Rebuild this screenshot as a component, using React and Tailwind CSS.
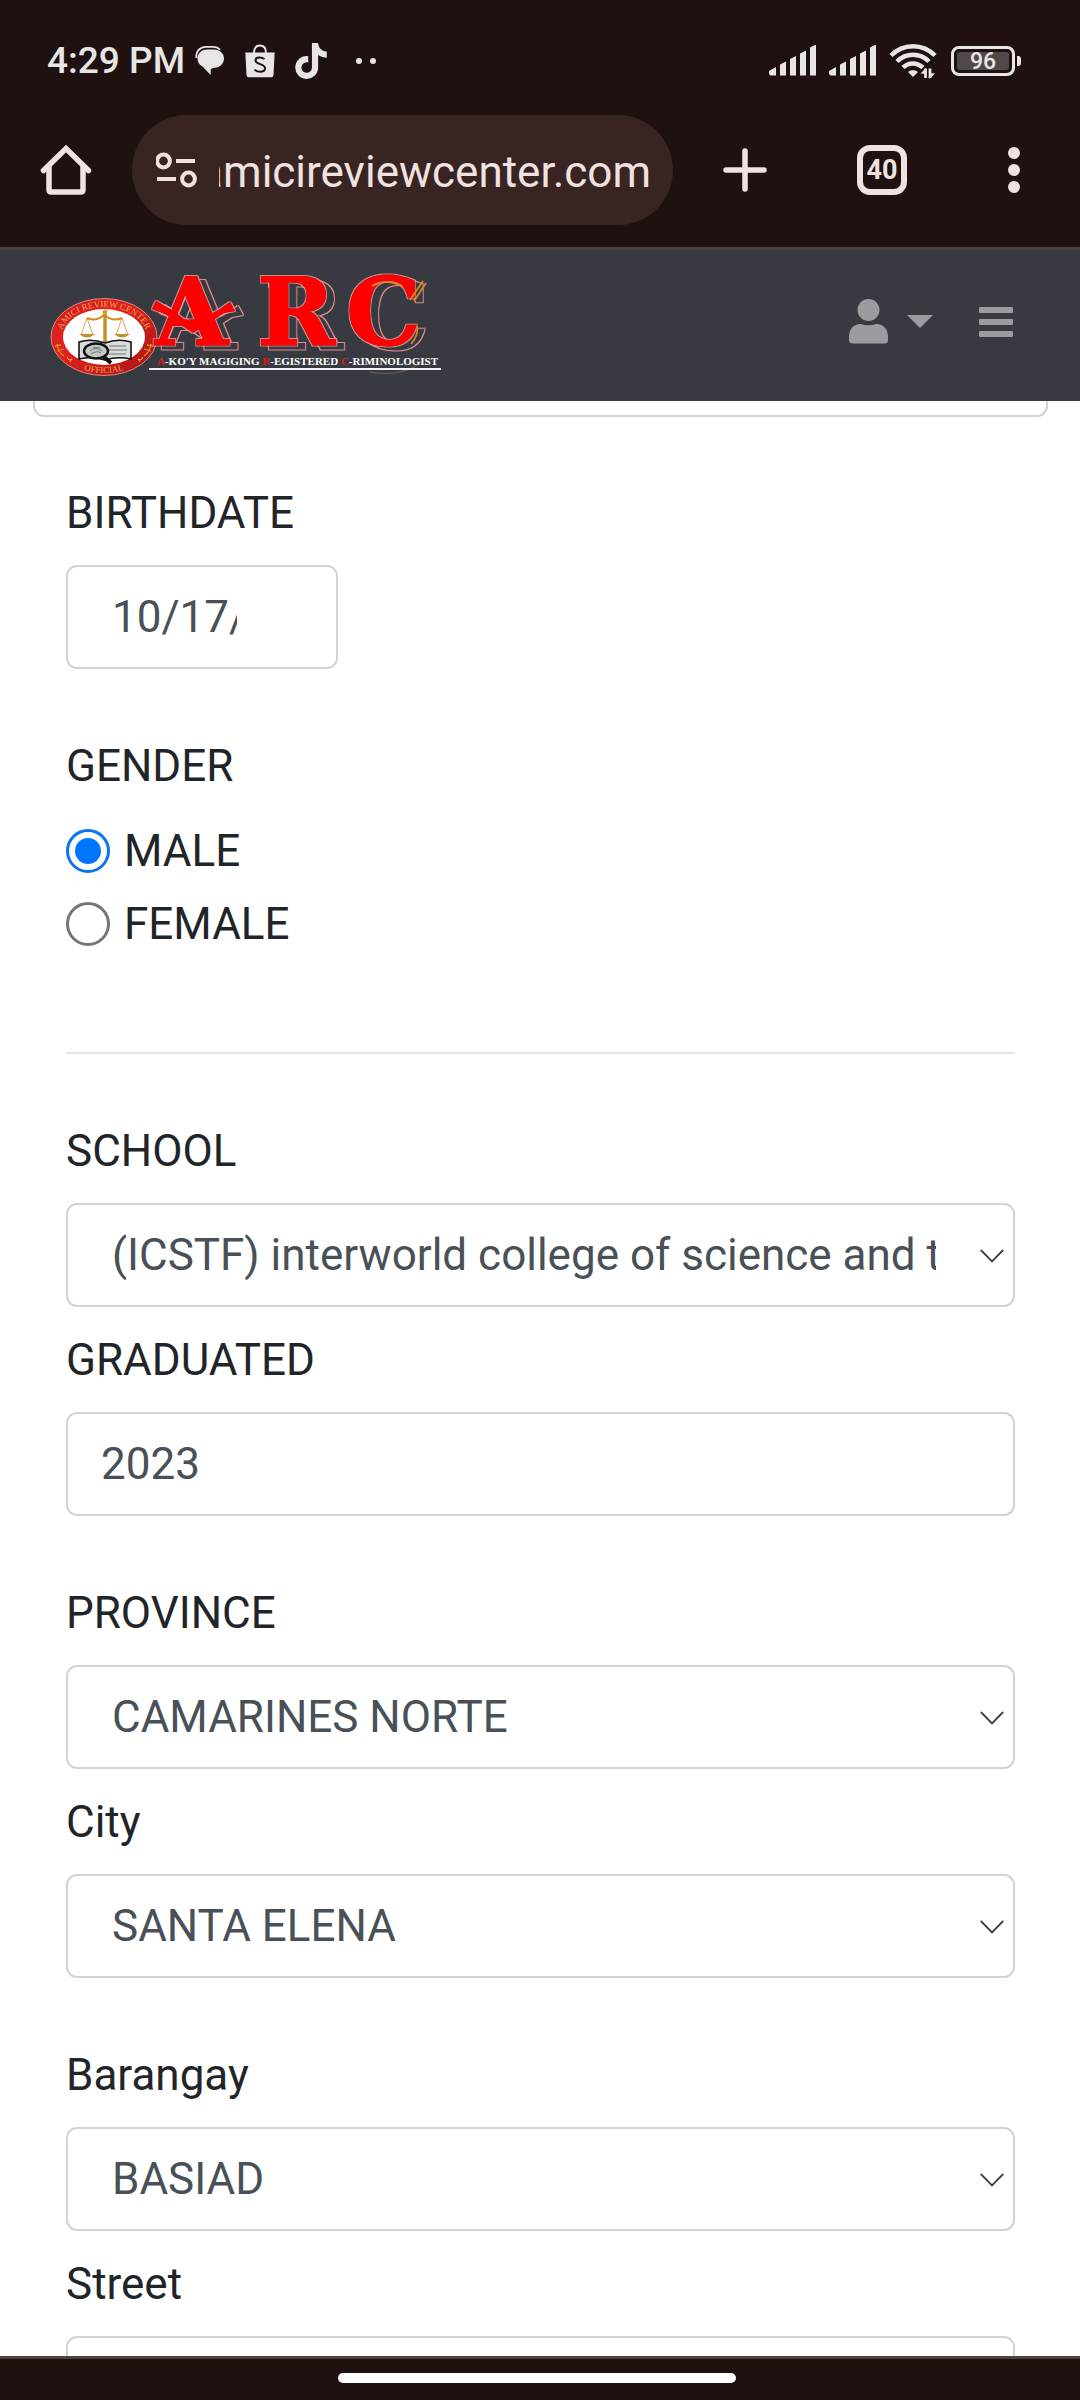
import { FaTiktok } from "react-icons/fa6";

const label = "block text-[44px] leading-[66px] text-[#212529]";
const control =
  "h-[104px] rounded-[11px] border-2 border-[#ced4da] bg-white text-[44px] leading-[66px] text-[#495057] outline-none";

function ChatIcon() {
  return (
    <svg width="30" height="30" viewBox="0 0 30 30" aria-hidden="true">
      <path d="M1.500 12C.2 5.500 5 1.200 11 .9h7c3 0 5.500 1 7 3" fill="none" stroke="#e8e6e5" strokeWidth="1.800" />
      <path d="M12 3.500h7C25 3.500 29 7.500 29 12.500s-4 9-9.500 9.200c-2 .2-3.500.8-3.800 2.300V29L7.500 20.500C4 18.500 2.500 16 2.500 12.500c0-5 4-9 9.500-9z" fill="#e8e6e5" />
    </svg>
  );
}

function BagIcon() {
  return (
    <svg width="30" height="34" viewBox="0 0 30 34" aria-hidden="true">
      <path d="M9 9c0-5 2.500-7.500 6-7.500S21 4 21 9" fill="none" stroke="#e8e6e5" strokeWidth="1.800" />
      <path d="M.3 8.500h29.400L28.500 31c-.2 1.500-1.200 2.300-2.500 2.300H4c-1.300 0-2.300-.8-2.500-2.300z" fill="#e8e6e5" />
      <path d="M19.500 15c-3-2.200-9-2.500-9 1.300 0 4.700 9.500 2.900 9.500 8 0 4.500-7.500 4.200-10.500 1.300" fill="none" stroke="#1f1110" strokeWidth="2" />
    </svg>
  );
}

function Signal() {
  return (
    <svg width="48" height="32" viewBox="0 0 48 32" fill="#e8e6e5" aria-hidden="true">
      <path d="M0 26l7-4v8.500H1.500L0 29z" />
      <path d="M11 19.500l6-3v14h-6z" />
      <path d="M21 14l6-3v19.500h-6z" />
      <path d="M31 8.500l6-3v25h-6z" />
      <path d="M41 2.500l6-3v31h-6z" />
    </svg>
  );
}

function Wifi() {
  return (
    <svg width="48" height="36" viewBox="0 0 48 36" fill="none" stroke="#e8e6e5" strokeWidth="4.500" aria-hidden="true">
      <path d="M2 12.500c12-12.500 32-12.500 44 0" />
      <path d="M8 18.500c9-9 23-9 32 0" />
      <path d="M14 24.500c5.500-5.500 14-5.500 20 0" />
      <path d="M24 34l-5-5c2.500-2.500 7.500-2.500 10 0z" fill="#e8e6e5" stroke="none" />
      <path d="M36.500 25.500v9.500M41 25.500V35" strokeWidth="2.800" />
      <path d="M31.500 30.500L37 25v6zM46 30.500L40.500 36v-6z" fill="#e8e6e5" stroke="none" />
    </svg>
  );
}

function StatusBar() {
  return (
    <div className="flex h-12 items-center justify-between pl-[47px] pr-[59px] text-[#e8e6e5]">
      <div className="flex items-center">
        <span className="text-[37px] leading-[48px] font-medium">4:29 PM</span>
        <div className="ml-[10px] flex items-center gap-5">
          <ChatIcon />
          <BagIcon />
          <FaTiktok className="h-9 w-8" />
          <div className="ml-[9px] flex gap-2">
            <span className="size-[6px] rounded-full bg-[#e8e6e5]" />
            <span className="size-[6px] rounded-full bg-[#e8e6e5]" />
          </div>
        </div>
      </div>
      <div className="flex items-center gap-3">
        <Signal />
        <Signal />
        <Wifi />
        <div className="flex items-center gap-0.5 pl-0.5">
          <div className="flex h-[30px] w-16 items-center justify-center rounded-[8px] border-[3px] border-[#e8e6e5] p-[3px]">
            <span className="flex h-[18px] w-full items-center justify-center rounded-[3px] bg-[#514848] pt-0.5 text-[23px] leading-[18px] font-medium">
              96
            </span>
          </div>
          <span className="h-[10px] w-1 rounded-r-[3px] bg-[#e8e6e5]" />
        </div>
      </div>
    </div>
  );
}

function Toolbar() {
  return (
    <div className="flex items-center pr-[53px] pl-10">
      <button type="button" aria-label="Home">
        <svg width="52" height="52" viewBox="0 0 52 52" fill="none" stroke="#f0e2e0" strokeWidth="5.500" aria-hidden="true">
          <path d="M3.500 26.500L26 4.500l22.500 22" strokeLinecap="round" />
          <path d="M9 22v23.500q0 2.500 2.500 2.500h29q2.500 0 2.500-2.500V22" />
        </svg>
      </button>
      <div className="ml-10 flex h-[110px] min-w-0 flex-1 items-center rounded-full bg-[#382422] pr-[22px] pl-6">
        <svg width="42" height="36" viewBox="0 0 42 36" fill="none" stroke="#f0e2e0" strokeWidth="4" className="shrink-0" aria-hidden="true">
          <circle cx="7.500" cy="9" r="6.400" />
          <path d="M20 9h19M1 27h19" />
          <circle cx="32.500" cy="27" r="6.400" />
        </svg>
        <div className="ml-[21px] flex min-w-0 flex-1 justify-end overflow-hidden pt-1 text-[44px] leading-[60px] text-[#f0e2e0]">
          <span>amicireviewcenter.com</span>
        </div>
      </div>
      <div className="ml-[49px] flex items-center gap-[89px]">
        <button type="button" aria-label="New tab">
          <svg width="46" height="46" viewBox="0 0 46 46" stroke="#f0e2e0" strokeWidth="5.500" strokeLinecap="round" aria-hidden="true">
            <path d="M23 4v38M4 23h38" />
          </svg>
        </button>
        <button
          type="button"
          aria-label="40 open tabs"
          className="flex size-[50px] items-center justify-center rounded-[13px] border-[6px] border-[#f0e2e0] text-[27px] leading-[30px] font-bold text-[#f0e2e0]"
        >
          40
        </button>
      </div>
      <button type="button" aria-label="More options" className="ml-[94px] flex w-[26px] flex-col items-center gap-[5px]">
        <span className="size-[12px] rounded-full bg-[#f0e2e0]" />
        <span className="size-[12px] rounded-full bg-[#f0e2e0]" />
        <span className="size-[12px] rounded-full bg-[#f0e2e0]" />
      </button>
    </div>
  );
}

function Logo() {
  return (
    <svg width="396" height="108" viewBox="0 0 396 108" role="img" aria-label="ARC, Amici Review Center">
      <defs>
        <path id="sealTop" d="M16 79A43 30 0 1 1 92 79" />
        <path id="sealBottom" d="M12 85A50 35 0 0 0 96 85" />
        <linearGradient id="sealRed" x1="0" y1="0" x2="1" y2="1">
          <stop offset="0" stopColor="#cf1f20" />
          <stop offset="0.400" stopColor="#e3211e" />
          <stop offset="1" stopColor="#a51414" />
        </linearGradient>
        <filter id="echo" x="-10%" y="-10%" width="120%" height="125%" colorInterpolationFilters="sRGB">
          <feMorphology in="SourceAlpha" operator="dilate" radius="1" result="wide" />
          <feComposite in="wide" in2="SourceAlpha" operator="out" result="ring" />
          <feOffset in="ring" dx="8" dy="4" result="moved" />
          <feFlood floodColor="#e58a8c" />
          <feComposite in2="moved" operator="in" result="line" />
          <feFlood floodColor="#f4a0a0" floodOpacity="0.800" />
          <feComposite in2="ring" operator="in" result="edge" />
          <feMerge>
            <feMergeNode in="line" />
            <feMergeNode in="edge" />
            <feMergeNode in="SourceGraphic" />
          </feMerge>
        </filter>
      </defs>
      <ellipse cx="54" cy="65" rx="53" ry="38.500" fill="url(#sealRed)" stroke="#d98a84" strokeWidth="1" />
      <ellipse cx="54" cy="65" rx="41" ry="28" fill="#fff" />
      <g fontFamily="Liberation Serif, serif" fontSize="9" fill="#f0a850" textAnchor="middle">
        <text>
          <textPath href="#sealTop" startOffset="50%">AMICI REVIEW CENTER</textPath>
        </text>
        <text>
          <textPath href="#sealBottom" startOffset="50%">OFFICIAL</textPath>
        </text>
      </g>
      <g fill="none" stroke="#d98c22" strokeWidth="1.800">
        <path d="M7 72q1 8 7 12M5 74l6-1M7 79l7-2M101 72q-1 8-7 12M103 74l-6-1M101 79l-7-2" strokeWidth="1.300" />
        <path d="M37 46q9 4 17-3 9 7 18 3" strokeWidth="2" />
        <path d="M55 40v33" strokeWidth="3.500" stroke="#c98e2a" />
        <path d="M37 46l-6 17M37 46l6 17M72 46l-6 17M72 46l6 17" strokeWidth="0.800" />
      </g>
      <circle cx="55" cy="40" r="2.500" fill="#d9a13a" />
      <path d="M29 62h16q-8 7-16 0zM64 62h16q-8 7-16 0z" fill="#c98e2a" />
      <path d="M29 70q12-4 26 1 13-5 26-1v17q-13-3-26 1-13-4-26-1z" fill="#d9dedc" stroke="#111" strokeWidth="1.600" />
      <path d="M55 71v15M59 74h17M59 78h18M59 82h17" stroke="#6f7472" strokeWidth="1" />
      <ellipse cx="46" cy="79" rx="12" ry="7.500" fill="#c3c9c6" stroke="#111" strokeWidth="2.500" />
      <path d="M40 79q5-5 12 0M41 82q6-4 10-1M43 76q4-1 7 0" stroke="#6f7472" fill="none" />
      <path d="M54 85l7 6" stroke="#111" strokeWidth="4" />
      <path d="M17 85l2 3 3-1-2 3M93 85l-2 3-3-1 2 3" stroke="#f0b050" fill="none" />
      <g fontFamily="DejaVu Serif, serif" fontWeight="700" fontSize="94" fill="#ff0000" stroke="#ff0000" strokeWidth="1" filter="url(#echo)">
        <text x="105" y="73">A</text>
        <text x="207" y="73">R</text>
        <text x="296" y="73">C</text>
        <path d="M106 29l14 8 22 16 28-16 10-7 5 9-11 2-31 20-28-19-13-5z" stroke="none" />
      </g>
      <path d="M360 28l13-19M364 29l12-18M367 54q2 9-6 18" stroke="#d88a20" strokeWidth="1.800" fill="none" />
      <path d="M322 14q14-8 30 0" stroke="#d88a20" strokeWidth="2" fill="none" />
      <path d="M319 100q36 6 56-13" stroke="#7a6248" strokeWidth="1" fill="none" />
      <text x="107" y="93" fontFamily="Liberation Serif, serif" fontWeight="700" fontSize="11" fill="#fff">
        <tspan fill="#e01818">A</tspan>-KO'Y MAGIGING <tspan fill="#e01818">R</tspan>-EGISTERED <tspan fill="#e01818">C</tspan>-RIMINOLOGIST
      </text>
      <path d="M99 97h292" stroke="#f4f4f4" strokeWidth="2" />
    </svg>
  );
}

function Navbar() {
  return (
    <nav className="flex h-[151px] items-center justify-between bg-[#373b41] pr-[67px] pl-[50px]">
      <a href="#home">
        <Logo />
      </a>
      <div className="flex items-center gap-[46px] pb-2 text-[#9a9da0]">
        <button type="button" aria-label="Account menu" className="flex items-center gap-[19px]">
          <svg width="39" height="45" viewBox="0 0 39 45" fill="currentColor" aria-hidden="true">
            <circle cx="19.500" cy="11" r="11" />
            <path d="M0 37.500C0 30 5 24.700 12 25q7.500 2.500 15 0c7-.3 12 5 12 12.500v3.500q0 3.500-3.500 3.500h-32Q0 44.500 0 41z" />
          </svg>
          <svg width="26" height="13" viewBox="0 0 26 13" fill="currentColor" aria-hidden="true">
            <path d="M0 0h26L13 13z" />
          </svg>
        </button>
        <button type="button" aria-label="Toggle navigation" className="flex w-[34px] flex-col gap-[6px]">
          <span className="h-[6px] rounded-[1px] bg-[#9a9da0]" />
          <span className="h-[6px] rounded-[1px] bg-[#9a9da0]" />
          <span className="h-[6px] rounded-[1px] bg-[#9a9da0]" />
        </button>
      </div>
    </nav>
  );
}

function SelectField({ id, title, value }) {
  return (
    <div className="flex flex-col gap-[19px]">
      <label htmlFor={id} className={label}>{title}</label>
      <div className="relative">
        <select id={id} defaultValue={value} className={`${control} block w-full appearance-none pr-[77px] pl-[44px]`}>
          <option>{value}</option>
        </select>
        <svg width="24" height="14" viewBox="0 0 24 14" fill="none" stroke="#3d4247" strokeWidth="1.800" className="pointer-events-none absolute top-[46px] right-[11px]" aria-hidden="true">
          <path d="M.8 1L12 12.500 23.200 1" />
        </svg>
      </div>
    </div>
  );
}

function TextField({ id, title, value, className }) {
  return (
    <div className="flex flex-col gap-[19px]">
      <label htmlFor={id} className={label}>{title}</label>
      <input id={id} type="text" defaultValue={value} className={`${control} ${className}`} />
    </div>
  );
}

function RadioOption({ title, checked }) {
  return (
    <label className="flex items-center gap-[14px] text-[44px] leading-[66px] text-[#212529]">
      <input
        type="radio"
        name="gender"
        defaultChecked={checked}
        className="size-[44px] appearance-none rounded-full border-[3px] border-[#767676] bg-clip-content p-[6px] checked:border-[#0d74ef] checked:bg-[#0075ff]"
      />
      {title}
    </label>
  );
}

export default function App() {
  return (
    <div className="flex h-screen flex-col bg-white font-[Roboto,sans-serif]">
      <header className="shrink-0">
        <div className="flex flex-col gap-[30px] border-b-[3px] border-[#4f3f3e] bg-[#1f1110] pt-[37px] pb-[22px]">
          <StatusBar />
          <Toolbar />
        </div>
        <Navbar />
      </header>

      <main className="min-h-0 flex-1 overflow-hidden">
        <div className="mr-8 ml-[33px] h-4 rounded-b-[11px] border-x-2 border-b-2 border-[#ced4da]" />
        <form className="flex flex-col pt-[63px] pr-[65px] pl-[66px]">
          <TextField id="birthdate" title="BIRTHDATE" value="10/17/2000" className="w-[272px] pr-[99px] pl-[44px]" />

          <fieldset className="mt-16">
            <legend className={label}>GENDER</legend>
            <div className="mt-[19px] flex flex-col gap-[7px]">
              <RadioOption title="MALE" checked />
              <RadioOption title="FEMALE" />
            </div>
          </fieldset>

          <hr className="mt-[95px] border-t-2 border-[#e5e5e5]" />

          <div className="mt-16 flex flex-col gap-16">
            <div className="flex flex-col gap-5">
              <SelectField id="school" title="SCHOOL" value="(ICSTF) interworld college of science and technology" />
              <TextField id="graduated" title="GRADUATED" value="2023" className="w-full px-[33px]" />
            </div>
            <div className="flex flex-col gap-5">
              <SelectField id="province" title="PROVINCE" value="CAMARINES NORTE" />
              <SelectField id="city" title="City" value="SANTA ELENA" />
            </div>
            <div className="flex flex-col gap-5">
              <SelectField id="barangay" title="Barangay" value="BASIAD" />
              <TextField id="street" title="Street" value="" className="w-full px-[33px]" />
            </div>
          </div>
        </form>
      </main>

      <footer className="flex h-11 shrink-0 justify-center border-t-[3px] border-[#4f3f3e] bg-[#1f1110] pt-[14px] pr-1.5">
        <span className="h-[10px] w-[37%] rounded-full bg-white" />
      </footer>
    </div>
  );
}
